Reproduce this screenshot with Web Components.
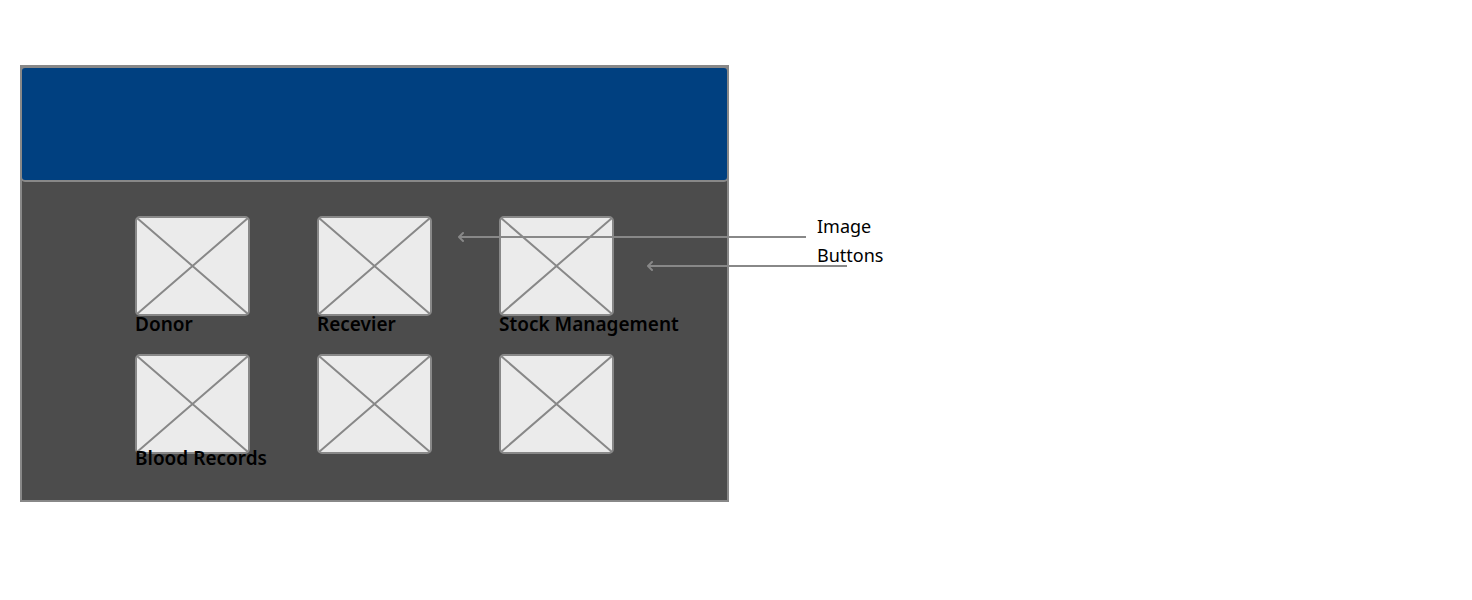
<!DOCTYPE html>
<html lang="en">
<head>
<meta charset="utf-8">
<title>Blood bank dashboard wireframe</title>
<style>
body { margin: 0; background: #fff; color: #000; font-family: "Noto Sans", sans-serif; }
</style>
</head>
<body>
<wire-stage>
  <wire-window>
    <image-button label="Donor"></image-button>
    <image-button label="Recevier"></image-button>
    <image-button label="Stock Management"></image-button>
    <image-button label="Blood Records" class="overlap"></image-button>
    <image-button></image-button>
    <image-button></image-button>
  </wire-window>
  <wire-note slot="note">Image<br>Buttons</wire-note>
  <note-arrows slot="arrows"></note-arrows>
</wire-stage>
<script>
const define = (name, html, setup) => {
  customElements.define(name, class extends HTMLElement {
    connectedCallback() {
      if (this.shadowRoot) return;
      const root = this.attachShadow({ mode: "open" });
      const template = document.createElement("template");
      template.innerHTML = html;
      root.append(template.content.cloneNode(true));
      if (setup) setup(this, root);
    }
  });
};

define("wire-stage", `
<style>
:host { display: block; padding: 65px 20px; }
main { position: relative; display: flex; align-items: flex-start; gap: 88px; }
</style>
<main><slot></slot><slot name="note"></slot><slot name="arrows"></slot></main>`);

define("wire-window", `
<style>
:host { display: block; box-sizing: border-box; flex: 0 1 709px; border: 2px solid #888; background: #4c4c4c; }
header { height: 112px; margin: -1px -2px 0; border: 2px solid #888; border-radius: 5px; background: #004080; }
section { display: grid; grid-template-columns: repeat(3, 115px); grid-auto-rows: 100px; gap: 38px 67px; padding: 34px 20px 46px 113px; }
</style>
<header></header>
<section><slot></slot></section>`);

define("image-button", `
<style>
:host { display: block; --label-gap: -6px; }
:host(.overlap) { --label-gap: -10px; }
button { display: block; width: 100%; padding: 0; border: 0; background: none; color: inherit; font: 600 19px/28px "Noto Sans", sans-serif; text-align: left; white-space: nowrap; cursor: pointer; }
svg { display: block; width: 115px; height: 100px; }
span { display: block; margin-top: var(--label-gap); position: relative; }
span:empty { display: none; }
</style>
<button type="button">
<svg viewBox="0 0 115 100" aria-hidden="true" fill="none" stroke="#888" stroke-width="2">
<rect x="1" y="1" width="113" height="98" rx="4" fill="#ebebeb"/>
<path d="M2 2L113 98M113 2L2 98"/>
</svg><span></span></button>`, (host, root) => {
  const label = host.getAttribute("label") || "";
  root.querySelector("span").textContent = label;
  if (!label) root.querySelector("button").setAttribute("aria-label", "Image button");
});

define("wire-note", `
<style>
:host { display: block; flex: none; padding-top: 147px; font-size: 18px; line-height: 29px; }
</style>
<slot></slot>`);

define("note-arrows", `
<style>
:host { position: absolute; left: 430px; top: 160px; pointer-events: none; }
svg { display: block; width: 400px; height: 50px; }
</style>
<svg viewBox="0 0 400 50" fill="none" stroke="#888" stroke-width="2" aria-hidden="true">
<path d="M356 12H9M397 41H198"/>
<path d="M13 8L9 12L13 16M202 37L198 41L202 45" stroke-linecap="round" stroke-linejoin="round"/>
</svg>`);
</script>
</body>
</html>
